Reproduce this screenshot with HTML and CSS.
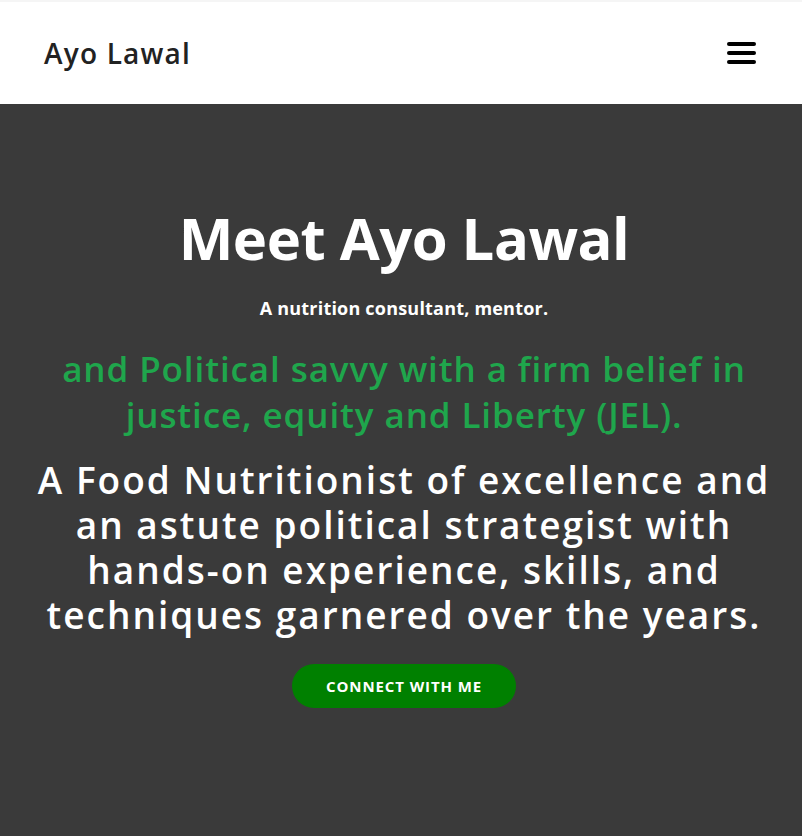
FILE: index.html
```html
<!DOCTYPE html>
<html lang="en">
<head>
<meta charset="utf-8">
<title>Ayo Lawal</title>
<link rel="stylesheet" href="styles.css">
</head>
<body>
<header class="topbar">
  <a class="brand" href="#">Ayo Lawal</a>
  <button class="menu" aria-label="Menu">
    <span></span><span></span><span></span>
  </button>
</header>
<section class="hero">
  <h1 class="hero-title">Meet Ayo Lawal</h1>
  <p class="hero-sub">A nutrition consultant, mentor.</p>
  <p class="hero-green">and Political savvy with a firm belief in justice, equity and Liberty (JEL).</p>
  <p class="hero-text">A Food Nutritionist of excellence and an astute political strategist with hands-on experience, skills, and techniques garnered over the years.</p>
  <a class="cta" href="#">CONNECT WITH ME</a>
</section>
</body>
</html>
```
FILE: styles.css
```css
* { box-sizing: border-box; }
html, body { margin: 0; padding: 0; }
body {
  font-family: "Open Sans", "Liberation Sans", sans-serif;
  background: #3a3a3a;
  height: 836px;
  overflow: hidden;
}
.topbar {
  height: 104px;
  background: #fff;
  border-top: 2px solid #f5f5f5;
  display: flex;
  align-items: center;
  justify-content: space-between;
  padding: 0 46px 0 44px;
}
.brand {
  font-size: 28px;
  font-weight: 600;
  color: #222;
  text-decoration: none;
  letter-spacing: 1.2px;
}
.menu {
  border: 0;
  background: none;
  padding: 0;
  width: 29px;
  display: flex;
  flex-direction: column;
  gap: 5px;
  cursor: pointer;
}
.menu span {
  display: block;
  height: 4px;
  border-radius: 2px;
  background: #000;
}
.hero {
  display: flex;
  flex-direction: column;
  align-items: center;
  text-align: center;
  padding: 96px 18px 0 24px;
}
.hero-title {
  margin: 0;
  color: #fff;
  font-size: 58px;
  font-weight: 700;
  line-height: 76px;
  letter-spacing: -0.5px;
}
.hero-sub {
  margin: 20px 0 0;
  color: #fff;
  font-size: 18px;
  font-weight: 700;
  line-height: 24px;
  letter-spacing: 0.2px;
}
.hero-green {
  margin: 26px 0 0;
  color: #1fa64c;
  font-size: 35px;
  font-weight: 600;
  line-height: 46px;
  letter-spacing: 0.9px;
  max-width: 710px;
}
.hero-text {
  margin: 19px 0 0;
  color: #fff;
  font-size: 37px;
  font-weight: 600;
  line-height: 45px;
  letter-spacing: 2px;
  max-width: 762px;
}
.cta {
  margin-top: 27px;
  width: 224px;
  height: 44px;
  flex: none;
  border-radius: 22px;
  background: #008000;
  color: #fff;
  font-size: 15px;
  font-weight: 700;
  letter-spacing: 0.9px;
  text-decoration: none;
  display: flex;
  align-items: center;
  justify-content: center;
}
```
